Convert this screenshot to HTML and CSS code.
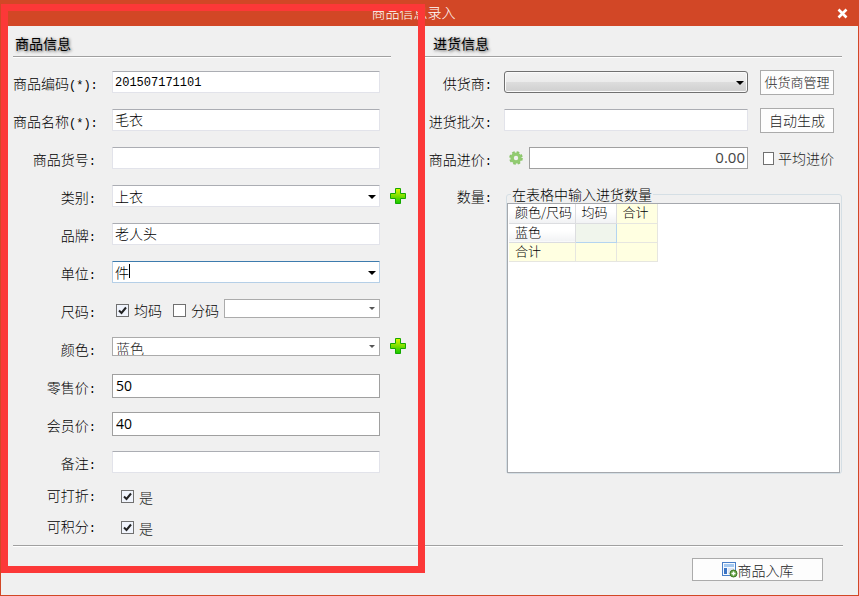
FILE: index.html
```
<!DOCTYPE html>
<html lang="zh-CN">
<head>
    <meta charset="UTF-8">
    <meta name="viewport" content="width=device-width, initial-scale=1.0">
    <title>商品信息录入</title>
    <link rel="stylesheet" href="styles.css">
</head>
<body>
    <form class="window">
        <header class="titlebar">
            <h1>商品信息录入</h1>
            <button type="button" class="close" aria-label="关闭">
                <svg width="11" height="11" viewBox="0 0 11 11"><path d="M1.5 1.5 L9.5 9.5 M9.5 1.5 L1.5 9.5" stroke="#fff" stroke-width="2.6"/></svg>
            </button>
        </header>

        <main class="panels">
            <section class="panel goods">
                <h2>商品信息</h2>
                <div class="row">
                    <label for="code">商品编码<span class="ascii">(*):</span></label>
                    <input type="text" id="code" class="field ascii" value="201507171101">
                </div>
                <div class="row">
                    <label for="name">商品名称<span class="ascii">(*):</span></label>
                    <input type="text" id="name" class="field" value="毛衣">
                </div>
                <div class="row">
                    <label for="number">商品货号<span class="ascii">:</span></label>
                    <input type="text" id="number" class="field">
                </div>
                <div class="row">
                    <label for="category">类别<span class="ascii">:</span></label>
                    <div class="combo">
                        <select id="category" class="field"><option>上衣</option></select>
                    </div>
                    <button type="button" class="add" aria-label="添加类别">
                        <svg width="16" height="16" viewBox="0 0 16 16">
                            <defs>
                                <linearGradient id="green" x1="0" y1="0" x2="0" y2="1">
                                    <stop offset="0" stop-color="#e4f500"/>
                                    <stop offset="1" stop-color="#12c800"/>
                                </linearGradient>
                            </defs>
                            <path d="M5.5 .5h5v5h5v5h-5v5h-5v-5h-5v-5h5z" fill="url(#green)" stroke="#14a800"/>
                        </svg>
                    </button>
                </div>
                <div class="row">
                    <label for="brand">品牌<span class="ascii">:</span></label>
                    <input type="text" id="brand" class="field" value="老人头">
                </div>
                <div class="row">
                    <label for="unit">单位<span class="ascii">:</span></label>
                    <div class="combo active">
                        <select id="unit" class="field"><option>件</option></select>
                    </div>
                </div>
                <div class="row">
                    <label for="sizes">尺码<span class="ascii">:</span></label>
                    <div class="sizes">
                        <label class="check"><input type="checkbox" checked>均码</label>
                        <label class="check"><input type="checkbox">分码</label>
                        <div class="combo flat">
                            <select id="sizes" class="field"><option></option></select>
                        </div>
                    </div>
                </div>
                <div class="row">
                    <label for="color">颜色<span class="ascii">:</span></label>
                    <div class="combo flat">
                        <select id="color" class="field"><option>蓝色</option></select>
                    </div>
                    <button type="button" class="add" aria-label="添加颜色">
                        <svg width="16" height="16" viewBox="0 0 16 16">
                            <path d="M5.5 .5h5v5h5v5h-5v5h-5v-5h-5v-5h5z" fill="url(#green)" stroke="#14a800"/>
                        </svg>
                    </button>
                </div>
                <div class="row">
                    <label for="retail">零售价<span class="ascii">:</span></label>
                    <input type="text" id="retail" class="field price" value="50">
                </div>
                <div class="row">
                    <label for="member">会员价<span class="ascii">:</span></label>
                    <input type="text" id="member" class="field price" value="40">
                </div>
                <div class="row">
                    <label for="remark">备注<span class="ascii">:</span></label>
                    <input type="text" id="remark" class="field">
                </div>
                <div class="row short">
                    <label for="discount">可打折<span class="ascii">:</span></label>
                    <label class="check yes"><input type="checkbox" id="discount" checked>是</label>
                </div>
                <div class="row short">
                    <label for="points">可积分<span class="ascii">:</span></label>
                    <label class="check yes"><input type="checkbox" id="points" checked>是</label>
                </div>
                <div class="highlight"></div>
            </section>

            <section class="panel purchase">
                <h2>进货信息</h2>
                <div class="row">
                    <label for="supplier">供货商<span class="ascii">:</span></label>
                    <div class="combo supplier">
                        <select id="supplier" class="field"><option></option></select>
                    </div>
                    <button type="button" class="btn small">供货商管理</button>
                </div>
                <div class="row">
                    <label for="batch">进货批次<span class="ascii">:</span></label>
                    <input type="text" id="batch" class="field">
                    <button type="button" class="btn">自动生成</button>
                </div>
                <div class="row">
                    <label for="cost">商品进价<span class="ascii">:</span></label>
                    <div class="cost">
                        <svg width="14" height="14" viewBox="0 0 14 14">
                            <circle cx="7" cy="7" r="5.8" fill="none" stroke="#8ac46a" stroke-width="2" stroke-dasharray="2.6 1.95"/>
                            <circle cx="7" cy="7" r="3.9" fill="none" stroke="#91cb70" stroke-width="3.4"/>
                        </svg>
                        <input type="text" id="cost" class="field amount" value="0.00">
                    </div>
                    <label class="check average"><input type="checkbox">平均进价</label>
                </div>
                <div class="row quantity">
                    <span class="caption">数量<span class="ascii">:</span></span>
                    <fieldset>
                        <legend>在表格中输入进货数量</legend>
                        <div class="sheet">
                            <table>
                                <tr>
                                    <th>颜色/尺码</th>
                                    <th>均码</th>
                                    <th class="sum">合计</th>
                                </tr>
                                <tr>
                                    <th>蓝色</th>
                                    <td class="selected"></td>
                                    <td class="sum"></td>
                                </tr>
                                <tr>
                                    <th class="sum">合计</th>
                                    <td class="sum"></td>
                                    <td class="sum"></td>
                                </tr>
                            </table>
                        </div>
                    </fieldset>
                </div>
            </section>
        </main>

        <footer class="footer">
            <button type="submit" class="btn save">
                <svg width="16" height="16" viewBox="0 0 16 16">
                    <rect x=".5" y=".5" width="13" height="13" fill="#f5f9ff" stroke="#4a7fc8"/>
                    <rect x="2" y="2" width="10" height="3" fill="#a4c8f0"/>
                    <rect x="2" y="6" width="3" height="6" fill="#3b74c4"/>
                    <rect x="6" y="6" width="6" height="6" fill="#dfe5f2"/>
                    <circle cx="11.5" cy="11.5" r="3.5" fill="#67a346" stroke="#3f7a22"/>
                    <path d="M11.5 9.5v4M9.5 11.5h4" stroke="#fff" stroke-width="1.4"/>
                </svg>商品入库
            </button>
        </footer>
    </form>
</body>
</html>
```
FILE: styles.css
```
* {
    box-sizing: border-box;
}
body {
    margin: 0;
    font-family: "Noto Sans CJK SC", sans-serif;
    font-size: 14px;
    font-weight: 300;
    line-height: 20px;
    color: #000;
}
input, select, button {
    font: inherit;
    color: inherit;
    margin: 0;
}
.ascii {
    font-family: "Liberation Mono", monospace;
    font-size: 12px;
}
.window {
    display: flex;
    flex-direction: column;
    min-height: 100vh;
    border: 1px solid #d24726;
    background-color: #f0f0f0;
}

/* title bar */
.titlebar {
    display: flex;
    height: 25px;
    background-color: #d24726;
    color: #fff;
}
.titlebar h1 {
    flex: 1;
    margin: 0;
    font-size: 14px;
    font-weight: 300;
    line-height: 22px;
    text-align: center;
}
.close {
    display: flex;
    align-items: center;
    justify-content: center;
    width: 32px;
    padding: 0;
    border: none;
    background: none;
}

/* panels */
.panels {
    display: grid;
    grid-template-columns: 394fr 423fr;
    gap: 12px;
    padding: 0 16px 0 12px;
}
.panel {
    position: relative;
}
.panel h2 {
    margin: 0 0 6px;
    padding: 6px 2px 2px;
    font-size: 14px;
    font-weight: 400;
    line-height: 22px;
    text-shadow: 1px 1px 3px #444;
    border-bottom: 1px solid #a0a0a0;
    box-shadow: 0 1px #fff;
}
.goods h2 {
    margin-right: 16px;
}
.purchase h2 {
    padding-left: 14px;
}
.row {
    display: grid;
    align-items: center;
    height: 38px;
}
.goods .row {
    grid-template-columns: 89px minmax(0, 1fr) 17px;
    column-gap: 10px;
}
.purchase .row {
    grid-template-columns: 85px minmax(0, 1fr) 74px;
    padding-right: 8px;
}
.goods .short {
    height: 31px;
}
.row > label:first-child, .caption {
    padding: 4px 6px 0 0;
    text-align: right;
    white-space: nowrap;
}
.purchase .row > label:first-child, .purchase .caption {
    padding-right: 12px;
}
.goods .short > label:first-child, .purchase .caption {
    padding-top: 0;
}

/* fields */
.field {
    display: block;
    width: 100%;
    height: 22px;
    padding: 0 2px 2px;
    border: 1px solid #e2e3ea;
    border-top-color: #abadb3;
    border-radius: 1px;
    background-color: #fff;
    appearance: none;
    outline: none;
}
.field.ascii {
    padding-top: 2px;
    padding-bottom: 0;
}
.price, .amount {
    font-family: "Open Sans", sans-serif;
    font-weight: 400;
    border-color: #a0a0a0;
    border-radius: 0;
}
.price {
    height: 24px;
    padding-left: 3px;
}
.amount {
    font-size: 15px;
    color: #444;
    text-align: right;
}
.combo {
    position: relative;
    flex: 1;
}
.combo::after {
    content: "";
    position: absolute;
    right: 4px;
    top: 10px;
    border: 4px solid transparent;
    border-top-color: #000;
    border-bottom: none;
    pointer-events: none;
}
.active .field {
    border-color: #b5cfe7;
    border-top-color: #3d7bad;
}
/* text caret */
.active::before {
    content: "";
    position: absolute;
    left: 17px;
    top: 3px;
    width: 1px;
    height: 14px;
    background-color: #000;
}
.flat {
    margin-bottom: 4px;
}
.flat .field {
    height: 19px;
    padding: 0 3px;
    color: #222;
    border-color: #ababab;
    border-radius: 0;
}
.combo.flat::after {
    right: 5px;
    top: 8px;
    border-width: 3px;
    border-top-color: #555;
    border-bottom: none;
}
.supplier .field {
    border-color: #707070;
    border-radius: 3px;
    background: linear-gradient(#f2f2f2, #ebebeb 50%, #dddddd 50%, #cfcfcf);
    box-shadow: inset 0 0 0 1px #fafafa;
}

/* check boxes */
.check {
    display: flex;
    align-items: center;
    gap: 5px;
    line-height: 18px;
    white-space: nowrap;
}
.check input {
    width: 13px;
    height: 13px;
    border: 1px solid #707070;
    background-color: #fff;
    appearance: none;
}
.check input:checked {
    background: #f0f4fc url("data:image/svg+xml,%3Csvg xmlns='http://www.w3.org/2000/svg' viewBox='0 0 11 11'%3E%3Cpath d='M2 5.5 L4.5 8 L9 2.5' fill='none' stroke='%23222' stroke-width='2'/%3E%3C/svg%3E");
}
.sizes {
    display: flex;
    align-items: center;
    gap: 5px;
    padding-left: 4px;
}
.sizes .check:first-child {
    margin-right: 6px;
}
.yes {
    padding-left: 9px;
    color: #222;
}
.average {
    gap: 4px;
    padding-left: 3px;
    color: #222;
}
.cost {
    display: flex;
    align-items: center;
    gap: 6px;
    padding-left: 5px;
}
.cost svg {
    flex-shrink: 0;
}

/* buttons */
.add {
    display: flex;
    padding: 0;
    border: none;
    background: none;
}
.flat + .add {
    margin-bottom: 4px;
}
.btn {
    height: 25px;
    padding: 0;
    color: #222;
    border: 1px solid #ababab;
    background-color: #fdfdfd;
    white-space: nowrap;
}
.small {
    font-size: 13px;
}
.purchase .field {
    width: calc(100% - 12px);
}
.purchase .combo::after {
    right: 16px;
}
.purchase .amount {
    width: 100%;
}
.purchase .cost {
    margin-right: 12px;
}

/* quantity table */
.purchase .quantity {
    grid-template-columns: 85px minmax(0, 1fr);
    align-items: start;
    height: auto;
    padding: 9px 0 0;
}
fieldset {
    min-width: 0;
    margin: 0 0 0 2px;
    padding: 0 1px 0 0;
    border: 1px solid #d5dfe5;
    border-radius: 3px;
}
legend {
    margin-left: 4px;
    padding: 0 1px;
    line-height: 17px;
}
.sheet {
    min-height: 270px;
    padding: 0 1px;
    border: 1px solid #a5a8ad;
    background-color: #fff;
}
table {
    border-collapse: collapse;
    font-size: 13px;
    line-height: 16px;
}
th, td {
    height: 19px;
    min-width: 41px;
    padding: 0 0 2px 6px;
    font-weight: 300;
    text-align: left;
    border-right: 1px solid #dcdde0;
    border-bottom: 1px solid #dcdde0;
    white-space: nowrap;
}
th {
    background: linear-gradient(#fff 40%, #f1f2f4);
}
th:first-child {
    min-width: 66px;
}
td {
    width: 41px;
}
.sum {
    background: #ffffe1;
    border-color: #e6e6e0;
}
.selected {
    background-color: #f0f5ec;
    border: 1px solid #b4d4f0;
}

.footer {
    display: flex;
    justify-content: flex-end;
    margin: 2px 15px 14px 12px;
    padding: 12px 20px 0;
    border-top: 1px solid #a0a0a0;
    box-shadow: inset 0 1px #fff;
}
.save {
    display: flex;
    align-items: center;
    justify-content: center;
    width: 131px;
    height: 23px;
}

/* red frame round the goods panel */
.highlight {
    position: absolute;
    z-index: 1;
    top: -22px;
    right: -18px;
    bottom: -30px;
    left: -12px;
    border: 7px solid #fc3838;
    pointer-events: none;
}
```
